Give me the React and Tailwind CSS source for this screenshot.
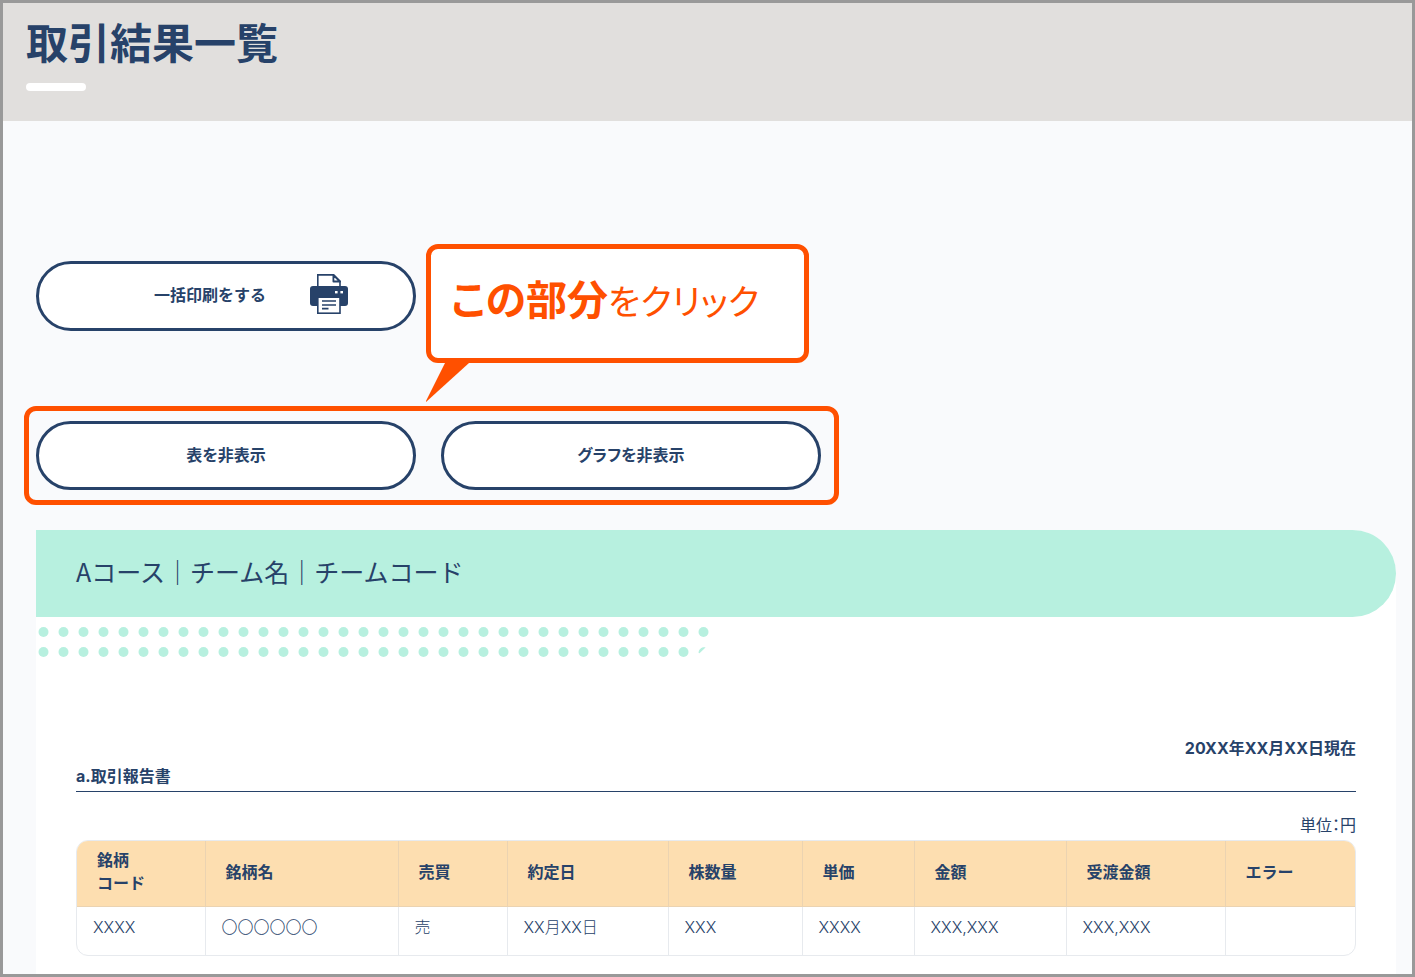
import React from "react";

const columns = [
  { label: "銘柄コード", lines: ["銘柄", "コード"], value: "XXXX", width: "w-[128px]" },
  { label: "銘柄名", value: "〇〇〇〇〇〇", width: "w-[193px]" },
  { label: "売買", value: "売", width: "w-[109px]" },
  { label: "約定日", value: "XX月XX日", width: "w-[161px]" },
  { label: "株数量", value: "XXX", width: "w-[134px]" },
  { label: "単価", value: "XXXX", width: "w-[112px]" },
  { label: "金額", value: "XXX,XXX", width: "w-[152px]" },
  { label: "受渡金額", value: "XXX,XXX", width: "w-[159px]" },
  { label: "エラー", value: "", width: "w-[130px]" },
];

function PrinterIcon() {
  return (
    <svg className="h-10 w-[38px] shrink-0" viewBox="0 0 38 40" aria-hidden="true">
      <path d="M7.8 13V.9H23.5L30 7.4V13" fill="#fff" stroke="#274269" strokeWidth="1.6" />
      <path d="M23.4 1V7.5H30Z" fill="#fff" stroke="#274269" strokeWidth="1.8" strokeLinejoin="round" />
      <rect x="0" y="12" width="38" height="20" rx="3" fill="#274269" />
      <rect x="25" y="17" width="2.6" height="2.4" fill="#fff" />
      <rect x="30.4" y="17" width="2.6" height="2.4" fill="#fff" />
      <rect x="7.8" y="23.2" width="22.2" height="16" fill="#fff" stroke="#274269" strokeWidth="1.6" />
      <path d="M12 27H26M12 31H26M12 34.6H18.5" stroke="#274269" strokeWidth="1.7" />
    </svg>
  );
}

function DotPattern() {
  const dots = Array.from({ length: 34 }, (_, i) => 7.5 + i * 20);
  return (
    <svg className="block h-[45px] w-[680px] max-w-full" viewBox="0 0 680 45" fill="#b7f0df" aria-hidden="true">
      {dots.map((x) => (
        <circle key={x} cx={x} cy="15" r="5" />
      ))}
      {dots.slice(0, -1).map((x) => (
        <circle key={x} cx={x} cy="35" r="5" />
      ))}
      <path d="M662.6 36C662.6 32 666 30 669.5 30.4L663.5 36.2Z" />
    </svg>
  );
}

const pill = "w-[380px] rounded-full border-3 border-[#274269] bg-white text-base font-bold";

export default function App() {
  return (
    <div className="flex min-h-screen flex-col border-3 border-[#999999] bg-[#f9fafc] font-['Noto_Sans_CJK_JP',sans-serif] text-[#274269]">
      <header className="bg-[#e1dfdd] px-[23px] pt-2 pb-[30px]">
        <h1 className="text-[42px] leading-[60px] font-bold">取引結果一覧</h1>
        <div className="mt-3 h-2 w-[60px] rounded-full bg-white" />
      </header>

      <main className="flex flex-1 flex-col pt-[140px] pr-4 pl-[33px]">
        <div className="relative flex">
          <button type="button" className={`${pill} flex h-[70px] items-center gap-11 pb-[5px] pl-[115px]`}>
            一括印刷をする
            <PrinterIcon />
          </button>
          <div className="absolute -top-[17px] left-[390px] w-[383px]">
            <p className="h-[119px] rounded-xl border-5 border-[#ff5000] bg-white pt-[18px] pl-5 text-[35px] leading-[60px] whitespace-nowrap text-[#ff5000] [font-feature-settings:'palt']">
              <strong className="text-[41px] font-bold">この部分</strong>
              をクリック
            </p>
            <svg className="block h-10 w-11" viewBox="0 0 44 40" aria-hidden="true">
              <path d="M19 0H43L-1 40Z" fill="#ff5000" />
            </svg>
          </div>
        </div>

        <div className="relative mt-[90px] flex w-fit gap-[25px]">
          <div className="pointer-events-none absolute -inset-y-[15px] -right-[18px] -left-3 rounded-xl border-5 border-[#ff5000]" />
          <button type="button" className={`${pill} h-[69px] pb-1 [font-feature-settings:'palt']`}>表を非表示</button>
          <button type="button" className={`${pill} h-[69px] pb-1 [font-feature-settings:'palt']`}>グラフを非表示</button>
        </div>

        <section className="mt-10 flex-1 rounded-tr-[44px] bg-white pb-[18px]">
          <h2 className="rounded-r-full bg-[#b7f0df] px-10 pt-[21px] pb-[25px] text-[25px] leading-[41px]">
            Aコース｜チーム名｜チームコード
          </h2>
          <DotPattern />

          <div className="px-10 pt-[72px]">
            <p className="text-right font-['Inter','Noto_Sans_CJK_JP',sans-serif] leading-7 font-bold">
              20XX年XX月XX日現在
            </p>
            <h3 className="border-b border-[#274269] pb-[1px] font-['Inter','Noto_Sans_CJK_JP',sans-serif] leading-7 font-bold">
              a.取引報告書
            </h3>
            <p className="mt-[18px] mb-[2px] text-right leading-7 [font-feature-settings:'palt']">単位：円</p>
            <div className="overflow-hidden rounded-xl border border-[#e7eaee]">
              <table className="w-full table-fixed border-collapse text-left">
                <thead className="bg-[#fddeb0]">
                  <tr className="h-[65px]">
                    {columns.map((c) => (
                      <th
                        key={c.label}
                        scope="col"
                        className={`${c.width} border-r border-b border-[#ebd3b1] pb-1 pl-5 leading-[23px] font-bold last:border-r-0`}
                      >
                        {c.lines ? c.lines.map((l) => <span key={l} className="block">{l}</span>) : c.label}
                      </th>
                    ))}
                  </tr>
                </thead>
                <tbody>
                  <tr className="h-[49px]">
                    {columns.map((c) => (
                      <td
                        key={c.label}
                        className="border-r border-[#e7eaee] pb-2 pl-4 font-['Inter','Noto_Sans_CJK_JP',sans-serif] font-light last:border-r-0"
                      >
                        {c.value}
                      </td>
                    ))}
                  </tr>
                </tbody>
              </table>
            </div>
          </div>
        </section>
      </main>
    </div>
  );
}
